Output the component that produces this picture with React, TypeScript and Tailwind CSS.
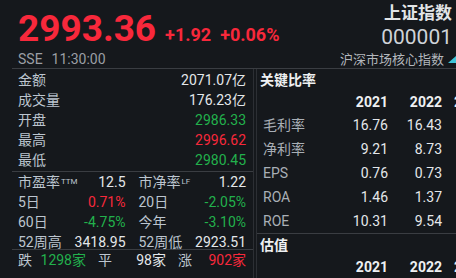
import React from 'react'

const RED = 'text-[#f8283b]'
const GREEN = 'text-[#22b14c]'
const WHITE = 'text-[#e4e7ea]'

type Cell = { label: string; sup?: string; value: string; color: string }

const quoteRows: { label: string; value: string; color: string }[] = [
  { label: '金额', value: '2071.07亿', color: WHITE },
  { label: '成交量', value: '176.23亿', color: WHITE },
  { label: '开盘', value: '2986.33', color: GREEN },
  { label: '最高', value: '2996.62', color: RED },
  { label: '最低', value: '2980.45', color: GREEN },
]

const gridRows: Cell[][] = [
  [
    { label: '市盈率', sup: 'TTM', value: '12.5', color: WHITE },
    { label: '市净率', sup: 'LF', value: '1.22', color: WHITE },
  ],
  [
    { label: '5日', value: '0.71%', color: RED },
    { label: '20日', value: '-2.05%', color: GREEN },
  ],
  [
    { label: '60日', value: '-4.75%', color: GREEN },
    { label: '今年', value: '-3.10%', color: GREEN },
  ],
  [
    { label: '52周高', value: '3418.95', color: WHITE },
    { label: '52周低', value: '2923.51', color: WHITE },
  ],
]

const ratios = [
  { label: '毛利率', vals: ['16.76', '16.43'] },
  { label: '净利率', vals: ['9.21', '8.73'] },
  { label: 'EPS', vals: ['0.76', '0.73'] },
  { label: 'ROA', vals: ['1.46', '1.37'] },
  { label: 'ROE', vals: ['10.31', '9.54'] },
]

function YearHeader() {
  return (
    <div className="flex h-[22px] items-center font-bold text-[14px] text-[#eef0f2]">
      <div className="w-[77px] shrink-0" />
      <div className="w-[54px] shrink-0 text-right">2021</div>
      <div className="w-[54px] shrink-0 text-right">2022</div>
      <div className="ml-[12px] shrink-0">2</div>
    </div>
  )
}

export default function App() {
  return (
    <div
      className="w-[456px] h-[278px] overflow-hidden bg-[#15181c] text-[14px] leading-none"
      style={{ fontFamily: 'Roboto, "Noto Sans CJK SC", sans-serif' }}
    >
      {/* header */}
      <div className="ml-[12px] h-[69px] pl-[6px] pr-[4px] border-b border-[#3a3d42] flex justify-between">
        <div className="flex flex-col">
          <div className="flex items-baseline mt-[12px]">
            <span className={`text-[37px] font-bold leading-[34px] ${RED}`}>2993.36</span>
            <span className={`ml-[9px] text-[18px] font-bold ${RED}`}>+1.92</span>
            <span className={`ml-[9px] text-[18px] font-bold ${RED}`}>+0.06%</span>
          </div>
          <div className="mt-[6px] flex gap-[9px] text-[14px] text-[#9b9fa5]">
            <span>SSE</span>
            <span>11:30:00</span>
          </div>
        </div>
        <div className="flex flex-col items-end">
          <div className="mt-[5px] text-[17px] font-bold text-[#e2e4e6]">上证指数</div>
          <div className="mt-[5px] text-[21px] text-[#cfd3d8]">000001</div>
          <div className="mt-[5px] flex items-center text-[13px] text-[#b3b7bc]">
            沪深市场核心指数
            <span className="ml-[4px] mr-[-4px] inline-block w-[8px] h-[7px] bg-[#3fc4d9] [clip-path:polygon(100%_0,100%_100%,0_100%)]" />
          </div>
        </div>
      </div>

      <div className="flex h-[209px]">
        {/* left column */}
        <div className="ml-[12px] w-[242px] shrink-0 border-r border-[#2c2f34] flex flex-col">
          <div className="pt-[1px] pb-[1px] pl-[6px] pr-[7px] border-b border-[#3a3d42]">
            {quoteRows.map((r) => (
              <div key={r.label} className="h-[20px] flex items-center justify-between">
                <span className="text-[#bcc5cf]">{r.label}</span>
                <span className={r.color}>{r.value}</span>
              </div>
            ))}
          </div>
          <div className="pl-[6px] pr-[7px] border-b border-[#3a3d42]">
            {gridRows.map((row, i) => (
              <div
                key={i}
                className={`grid grid-cols-2 gap-x-[13px] ${i === 3 ? 'h-[17px] items-start pt-[3px]' : 'h-[20px] items-center'}`}
              >
                {row.map((c) => (
                  <div key={c.label} className="flex justify-between">
                    <span className="text-[#bcc5cf]">
                      {c.label}
                      {c.sup && <sup className="ml-[1px] text-[8px] relative top-[-3px]">{c.sup}</sup>}
                    </span>
                    <span className={c.color}>{c.value}</span>
                  </div>
                ))}
              </div>
            ))}
          </div>
          <div className="h-[20px] pl-[6px] pr-[7px] grid grid-cols-3 gap-x-[12px] items-center">
            <div className="flex justify-between">
              <span className="text-[#bcc5cf]">跌</span>
              <span className={GREEN}>1298家</span>
            </div>
            <div className="flex justify-between">
              <span className="text-[#bcc5cf]">平</span>
              <span className={WHITE}>98家</span>
            </div>
            <div className="flex justify-between">
              <span className="text-[#bcc5cf]">涨</span>
              <span className={RED}>902家</span>
            </div>
          </div>
        </div>

        {/* right panel */}
        <div className="ml-[2px] flex-1 border-l border-[#2c2f34] overflow-hidden">
          <div className="h-[22px] pl-[3px] flex items-center font-bold text-[14px] text-[#eef0f2]">关键比率</div>
          <YearHeader />
          <div className="border-b border-[#3a3d42]">
            {ratios.map((r) => (
              <div key={r.label} className="h-[24px] flex items-center">
                <div className="w-[77px] shrink-0 pl-[6px] text-[#a9afb6]">{r.label}</div>
                {r.vals.map((v, i) => (
                  <div key={i} className={`w-[54px] shrink-0 text-right ${WHITE}`}>
                    {v}
                  </div>
                ))}
              </div>
            ))}
          </div>
          <div className="h-[22px] pl-[3px] flex items-center font-bold text-[14px] text-[#eef0f2]">估值</div>
          <YearHeader />
        </div>
      </div>
    </div>
  )
}
